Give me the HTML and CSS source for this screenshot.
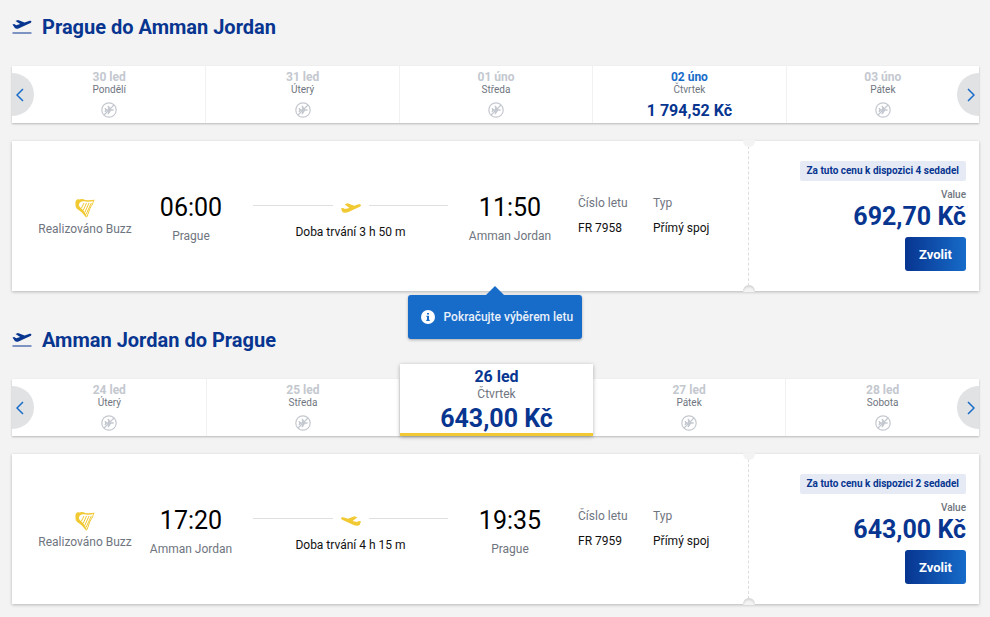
FILE: index.html
```html
<!doctype html>
<html lang="cs">
<head>
<meta charset="UTF-8">
<meta name="viewport" content="width=device-width, initial-scale=1">
<title>Výběr letu</title>
<link rel="stylesheet" href="styles.css">
</head>
<body>
	<!-- shared icons -->
	<svg class="sprite">
		<symbol id="takeoff" viewBox="0 0 20 16">
			<path d="M.5 5.600l1.700-.6 2 1.200 4-1.200-4.700-3 2.500-1.100 6.500 2.500 4.500-1.500c1.200-.4 2.300-.1 2.400.5.100.8-.6 1.400-1.500 1.800L6.500 9.400c-1.500.6-3 .4-3.800-.6z"/>
			<path d="M.5 13.500h19v1H.5z"/>
		</symbol>
		<symbol id="no-flight" viewBox="0 0 16 16">
			<circle cx="8" cy="8" r="7.200" fill="none" stroke="currentColor" stroke-width="1.200"/>
			<path d="M13 3L3 13" stroke="currentColor" stroke-width="1.200"/>
			<path d="M3.500 6h1.200l1.100 1.200h1.400L6.500 3.800h1.300l2.200 3.400h1.800c1.500 0 1.500 1.600 0 1.600H10l-2.200 3.400H6.500l.7-3.400H5.800L4.700 10H3.500l.6-2z"/>
		</symbol>
		<symbol id="harp" viewBox="0 0 20 20">
			<path d="M1.500 2C2.500.5 4 2 5.500 1.200 8 .2 9 2 12 2.200c3 .3 5.500-.5 8-.4-1.500 1.700-5 2.200-8 1.900-3-.2-4.500-1-6.500.3-2 1.500-2 4-.2 5.500 2.500 2 4.500 4.500 6 8l.4 2.500C9 17.500 7.500 14.500 4 12.300.5 10 .5 8.200.5 6.500.2 4.500.5 3 1.500 2z"/>
			<path fill="none" stroke="currentColor" d="M18.500 2.500c-.5 3-1.300 4-2.700 6.300-1.500 2.500-1.800 5-4 10.200M9 5L6.500 10M11.500 5L8.200 12.500M14 5L9.800 14.500M16.300 5L11 16.500"/>
		</symbol>
		<symbol id="plane" viewBox="0 0 20 10">
			<path d="M0 5.600l2.200-.6 1.800 1.100 4.500-1.200L3.700 1.500 6.500.2l6.700 2.500 3.800-1.200c1.600-.5 2.700-.2 2.900.5.200.9-.6 1.500-1.600 1.900L8 8.800c-2.500 1-5.300 1.500-6.600.2z"/>
		</symbol>
		<symbol id="prev" viewBox="0 0 8 14">
			<path d="M7 1L1 7l6 6" fill="none" stroke="currentColor" stroke-width="1.500"/>
		</symbol>
		<symbol id="next" viewBox="0 0 8 14">
			<path d="M1 1l6 6-6 6" fill="none" stroke="currentColor" stroke-width="1.500"/>
		</symbol>
		<symbol id="info" viewBox="0 0 14 14">
			<circle cx="7" cy="7" r="7" fill="#fff"/>
			<path d="M6 3h2v1.600H6zM5.500 5.800H8v4h.7V11H5.300V9.800H6V7h-.5z" fill="#176bc9"/>
		</symbol>
	</svg>

	<main>
		<!-- outbound -->
		<section class="journey">
			<h2><svg class="takeoff"><use href="#takeoff"/></svg>Prague do Amman Jordan</h2>
			<div class="carousel">
				<ul class="dates">
					<li><button class="date" disabled>
						<span class="date-day">30 led</span>
						<span class="date-name">Pondělí</span>
						<svg class="no-flight"><use href="#no-flight"/></svg>
					</button></li>
					<li><button class="date" disabled>
						<span class="date-day">31 led</span>
						<span class="date-name">Úterý</span>
						<svg class="no-flight"><use href="#no-flight"/></svg>
					</button></li>
					<li><button class="date" disabled>
						<span class="date-day">01 úno</span>
						<span class="date-name">Středa</span>
						<svg class="no-flight"><use href="#no-flight"/></svg>
					</button></li>
					<li><button class="date">
						<span class="date-day">02 úno</span>
						<span class="date-name">Čtvrtek</span>
						<span class="date-price">1 794,52 Kč</span>
					</button></li>
					<li><button class="date" disabled>
						<span class="date-day">03 úno</span>
						<span class="date-name">Pátek</span>
						<svg class="no-flight"><use href="#no-flight"/></svg>
					</button></li>
				</ul>
				<button class="arrow arrow-prev"><svg><use href="#prev"/></svg></button>
				<button class="arrow arrow-next"><svg><use href="#next"/></svg></button>
			</div>

			<div class="card">
				<div class="flight">
					<div class="carrier">
						<svg class="harp"><use href="#harp"/></svg>
						<span>Realizováno Buzz</span>
					</div>
					<div class="stop">
						<span class="time">06:00</span>
						<span class="city">Prague</span>
					</div>
					<div class="duration">
						<div class="route"><svg class="plane"><use href="#plane"/></svg></div>
						<span>Doba trvání 3 h 50 m</span>
					</div>
					<div class="stop">
						<span class="time">11:50</span>
						<span class="city">Amman Jordan</span>
					</div>
					<dl class="facts">
						<div><dt>Číslo letu</dt><dd>FR 7958</dd></div>
						<div><dt>Typ</dt><dd>Přímý spoj</dd></div>
					</dl>
				</div>
				<div class="fare">
					<span class="seats">Za tuto cenu k dispozici 4 sedadel</span>
					<span class="fare-name">Value</span>
					<span class="fare-price">692,70 Kč</span>
					<button class="select">Zvolit</button>
				</div>
				<div class="tooltip" role="tooltip"><svg><use href="#info"/></svg>Pokračujte výběrem letu</div>
			</div>
		</section>

		<!-- inbound -->
		<section class="journey">
			<h2><svg class="takeoff"><use href="#takeoff"/></svg>Amman Jordan do Prague</h2>
			<div class="carousel">
				<ul class="dates">
					<li><button class="date" disabled>
						<span class="date-day">24 led</span>
						<span class="date-name">Úterý</span>
						<svg class="no-flight"><use href="#no-flight"/></svg>
					</button></li>
					<li><button class="date" disabled>
						<span class="date-day">25 led</span>
						<span class="date-name">Středa</span>
						<svg class="no-flight"><use href="#no-flight"/></svg>
					</button></li>
					<li class="selected"><button class="date">
						<span class="date-day">26 led</span>
						<span class="date-name">Čtvrtek</span>
						<span class="date-price">643,00 Kč</span>
					</button></li>
					<li><button class="date" disabled>
						<span class="date-day">27 led</span>
						<span class="date-name">Pátek</span>
						<svg class="no-flight"><use href="#no-flight"/></svg>
					</button></li>
					<li><button class="date" disabled>
						<span class="date-day">28 led</span>
						<span class="date-name">Sobota</span>
						<svg class="no-flight"><use href="#no-flight"/></svg>
					</button></li>
				</ul>
				<button class="arrow arrow-prev"><svg><use href="#prev"/></svg></button>
				<button class="arrow arrow-next"><svg><use href="#next"/></svg></button>
			</div>

			<div class="card">
				<div class="flight">
					<div class="carrier">
						<svg class="harp"><use href="#harp"/></svg>
						<span>Realizováno Buzz</span>
					</div>
					<div class="stop">
						<span class="time">17:20</span>
						<span class="city">Amman Jordan</span>
					</div>
					<div class="duration">
						<div class="route"><svg class="plane plane-back"><use href="#plane"/></svg></div>
						<span>Doba trvání 4 h 15 m</span>
					</div>
					<div class="stop">
						<span class="time">19:35</span>
						<span class="city">Prague</span>
					</div>
					<dl class="facts">
						<div><dt>Číslo letu</dt><dd>FR 7959</dd></div>
						<div><dt>Typ</dt><dd>Přímý spoj</dd></div>
					</dl>
				</div>
				<div class="fare">
					<span class="seats">Za tuto cenu k dispozici 2 sedadel</span>
					<span class="fare-name">Value</span>
					<span class="fare-price">643,00 Kč</span>
					<button class="select">Zvolit</button>
				</div>
			</div>
		</section>
	</main>
</body>
</html>
```

FILE: styles.css
```css
*{
	box-sizing:border-box;
}
body{
	margin:0;
	background-color:#f3f3f3;
	font-family:Roboto, sans-serif;
	font-size:12px; line-height:16px;
	color:#6f7580;
}
button{
	font-family:inherit; border:0;
	padding:0; cursor:pointer;
}
button:disabled{
	cursor:default;
}
svg{
	fill:currentColor; flex:none;
}
.sprite{
	display:none;
}
main{
	padding:0 11px 0 12px;
}
.journey{
	padding:15px 0 22px;
}
.journey:last-child{
	padding-bottom:12px;
}
h2{
	display:flex; align-items:center; gap:10px;
	margin:0 0 27px;
	font-size:20px; line-height:24px;
	font-weight:700; color:#073590;
}
.takeoff{
	width:20px; height:16px;
}

/* date carousel */
.carousel{
	position:relative;
	margin-bottom:18px;
}
.dates{
	display:flex;
	height:57px;
	margin:0; padding:0 0 0 1px; list-style:none;
	background-color:#fff;
	box-shadow:0 1px 2px rgba(0,0,0,.25);
}
.dates li{
	flex:1;
	border-right:1px solid #f1f1f1;
}
.dates li:last-child{
	border-right:0;
}
.date{
	display:flex; flex-direction:column; align-items:center;
	width:100%; height:100%;
	padding-top:4px;
	background:none;
}
.date-day{
	font-size:12px; line-height:14px;
	font-weight:700; color:#176bc9;
}
.date:disabled .date-day{
	color:#c4c8cf;
}
.date-name{
	font-size:10px; line-height:12px;
	color:#6f7580;
}
.date-price{
	margin-top:6px;
	font-size:16px; line-height:18px;
	font-weight:700; color:#073590;
}
.no-flight{
	width:16px; height:16px;
	margin-top:6px;
	color:#c4c8cf;
}
.dates .selected{
	margin-top:-15px;
	border-right:0; border-bottom:3px solid #f1c933;
	background-color:#fff;
	box-shadow:0 1px 4px rgba(0,0,0,.3);
}
.selected .date-day{
	font-size:16px; line-height:18px;
	font-weight:700; color:#073590;
}
.selected .date-name{
	font-size:12px; line-height:16px;
}
.selected .date-price{
	margin-top:0;
	font-size:25px; line-height:34px;
}
.arrow{
	position:absolute; top:7px;
	display:flex; align-items:center;
	width:22px; height:43px;
	padding:0 4px;
	background-color:#e1e2e4; color:#176bc9;
}
.arrow svg{
	width:8px; height:14px;
}
.arrow-prev{
	left:0;
	border-radius:0 22px 22px 0;
}
.arrow-next{
	right:0;
	justify-content:flex-end;
	border-radius:22px 0 0 22px;
}

/* flight card */
.card{
	position:relative;
	display:flex;
	min-height:150px;
	background-color:#fff;
	box-shadow:0 1px 3px rgba(0,0,0,.25);
}
.flight{
	flex:1;
	display:grid;
	grid-template-columns:92px 96px 1fr 96px 178px;
	column-gap:12px;
	padding:51px 0 0 27px;
	align-items:start;
}
.carrier, .stop, .duration{
	display:flex; flex-direction:column; align-items:center;
	white-space:nowrap;
}
.carrier{
	padding-top:6px; gap:3px;
}
.stop{
	gap:4px;
}
.harp{
	width:20px; height:20px;
	color:#f1c933;
}
.time{
	font-size:25px; line-height:32px;
	color:#000;
}
.duration{
	padding:6px 2px 0; gap:6px;
	color:#111;
}
.route{
	display:flex; align-items:center; gap:8px;
	width:100%; height:20px;
}
.route::before, .route::after{
	content:"";
	flex:1; height:1px;
	margin-bottom:5px;
	background-color:#dfe0e2;
}
.plane{
	width:20px; height:10px;
	color:#f1c933;
}
.plane-back{
	transform:scaleX(-1);
}
.facts{
	display:grid;
	grid-template-columns:75px 1fr;
	margin:0; padding:3px 0 0 8px;
	white-space:nowrap;
}
.facts dd{
	margin:9px 0 0;
	color:#111;
}

/* price part, cut off by the dashed line */
.fare{
	position:relative;
	display:flex; flex-direction:column; align-items:flex-end;
	width:231px;
	padding:20px 13px 0 0;
	border-left:1px dashed #dcdde0;
}
.fare::before, .fare::after{
	content:"";
	position:absolute; left:-6px;
	width:12px; height:7px;
	background-color:#f3f3f3;
}
.fare::before{
	top:-1px;
	border-radius:0 0 6px 6px;
}
.fare::after{
	bottom:-1px;
	border-radius:6px 6px 0 0;
	box-shadow:inset 0 2px 2px rgba(0,0,0,.12);
}
.seats{
	padding:2px 7px 2px 6px;
	border-radius:2px;
	background-color:#e6eaf5;
	font-size:10px; font-weight:700;
	color:#073590;
}
.fare-name{
	margin-top:7px;
	font-size:10px; line-height:14px;
	font-weight:500;
}
.fare-price{
	font-size:25px; line-height:30px;
	font-weight:700; color:#073590;
}
.select{
	width:61px; height:34px;
	margin-top:5px;
	border-radius:3px;
	background-image:linear-gradient(to right, #073590, #176bc9);
	font-size:13px; font-weight:700;
	color:#fff;
}
.tooltip{
	position:absolute; top:100%; left:50%;
	display:flex; align-items:center; gap:9px;
	width:174px; height:44px;
	margin:4px 0 0 -88px; padding:0 13px;
	border-radius:3px;
	background-color:#176bc9;
	box-shadow:0 1px 3px rgba(0,0,0,.3);
	font-weight:500; color:#e8f0fa;
	white-space:nowrap;
}
.tooltip::before{
	content:"";
	position:absolute; top:-9px; left:50%;
	margin-left:-9px;
	border:9px solid transparent;
	border-top:0; border-bottom-color:#176bc9;
}
.tooltip svg{
	width:14px; height:14px;
}
```
